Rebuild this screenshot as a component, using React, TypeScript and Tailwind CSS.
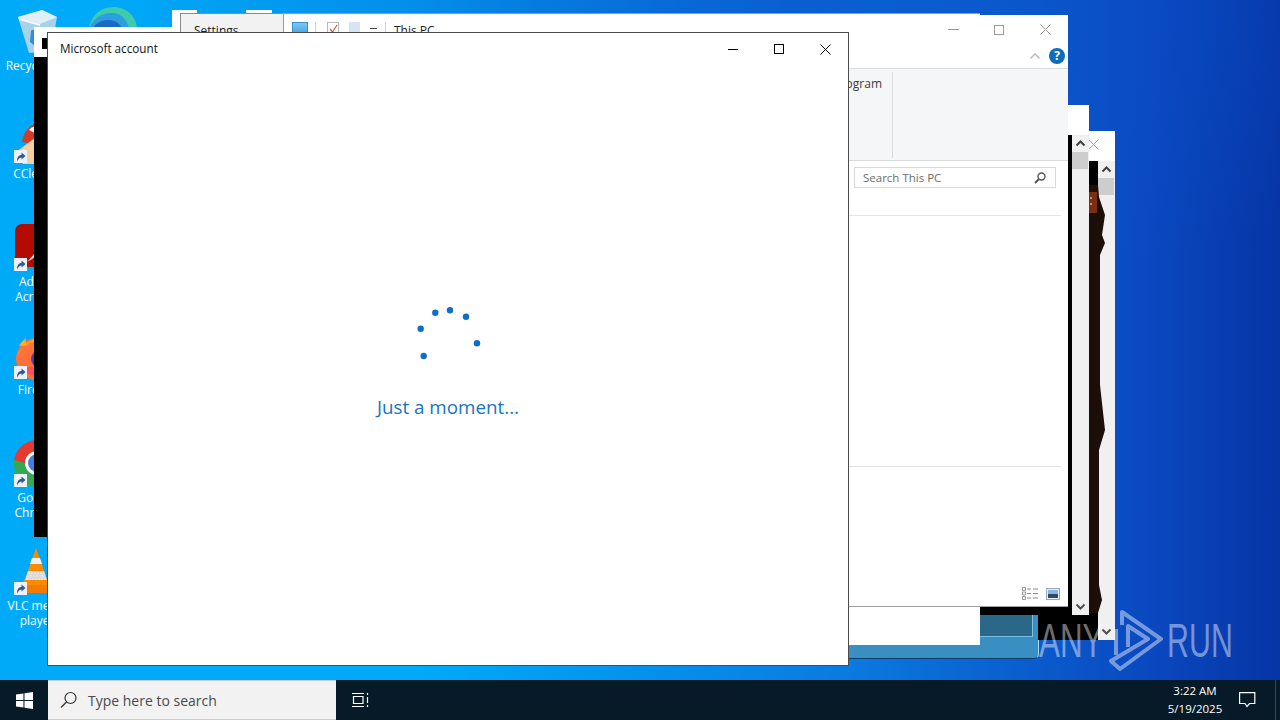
import type { ReactNode } from "react";

const ui = "font-['Open_Sans','Noto_Sans',sans-serif]";

function DesktopIcon({ art, children, shortcut = true }: { art: ReactNode; children: ReactNode; shortcut?: boolean }) {
  return (
    <div className="flex h-[108px] w-[76px] shrink-0 flex-col items-center">
      <div className="relative h-[48px] w-[48px]">
        {art}
        {shortcut && (
          <svg className="absolute left-[1px] top-[34px]" width="13" height="13" viewBox="0 0 13 13">
            <rect width="13" height="13" fill="#eef2f6" />
            <path d="M3 11.500 C3 7 5 5 7.500 5 L7.500 2.500 L11.500 6 L7.500 9.500 L7.500 7.500 C5.800 7.500 4.500 8.800 3 11.500 Z" fill="#2a5a9e" />
          </svg>
        )}
      </div>
      <div className={`mt-[2px] text-center text-[12px] leading-[15px] text-white ${ui}`}>{children}</div>
    </div>
  );
}

function DesktopIcons() {
  return (
    <>
      <svg className="absolute left-[86px] top-[6px]" width="52" height="30" viewBox="0 0 52 30">
        <path d="M2 30 C2 12 13 1 27 1 C41 1 51 11 51 24 L51 30 Z" fill="#3ccbab" />
        <path d="M2 30 C3 15 13 7 26 7 C37 7 44 17 44 30 Z" fill="#2d9fe0" />
        <path d="M3 30 C6 19 14 13 24 14 C33 15 38 22 38 30 Z" fill="#1a6cc0" />
      </svg>
      <div className="absolute left-[-1px] top-[8px] flex flex-col">
        <DesktopIcon
          shortcut={false}
          art={
            <svg width="48" height="48" viewBox="0 0 48 48">
              <path d="M5 9 L29 2 L44 9 L38 43 L16 45 Z" fill="#a6d3ea" />
              <path d="M5 9 L29 2 L44 9 L27 16 Z" fill="#e0eef6" />
              <path d="M5 9 L27 16 L27 18 L6 12 Z" fill="#f4f8fb" />
              <path d="M20 24 L30 22 L34 33 L26 39 L19 33 Z" fill="none" stroke="#2f8fd8" strokeWidth="4" />
            </svg>
          }
        >
          <span className="block w-[76px]">Recycle Bin</span>
        </DesktopIcon>
        <DesktopIcon
          art={
            <svg width="48" height="48" viewBox="0 0 48 48">
              <path d="M9 26 C11 12 21 5 35 4 L35 30 Z" fill="#d23a2a" />
              <path d="M16 14 C19 10 24 9 35 9 L35 24 Z" fill="#f5f5f5" />
              <path d="M3 36 L22 22 L35 26 L35 48 L10 48 Z" fill="#f4cfa0" />
            </svg>
          }
        >
          <span className="block pl-[3px]">CCleaner</span>
        </DesktopIcon>
        <DesktopIcon
          art={
            <svg width="48" height="48" viewBox="0 0 48 48">
              <rect x="2" y="0" width="46" height="43" rx="7" fill="#b30b00" />
              <path d="M14 38 C22 30 28 22 31 8 C31 22 26 32 14 38 Z" fill="#f7ddd8" />
            </svg>
          }
        >
          Adobe
          <br />
          Acrobat
        </DesktopIcon>
        <DesktopIcon
          art={
            <svg width="48" height="48" viewBox="0 0 48 48">
              <circle cx="24" cy="27" r="21" fill="#ff7139" />
              <path d="M6 14 C8 10 11 8 13 6 C12 10 13 12 16 13 Z" fill="#ffb01f" />
              <path d="M22 6 L12 12 L4 24 C8 14 16 10 24 10 Z" fill="#ffa21f" />
              <circle cx="27" cy="27" r="9" fill="#5a35b8" />
              <path d="M8 36 C14 44 26 46 36 40 L24 34 Z" fill="#ff4f5e" />
            </svg>
          }
        >
          Firefox
        </DesktopIcon>
        <DesktopIcon
          art={
            <svg width="48" height="48" viewBox="0 0 48 48">
              <path d="M24 0 A24 24 0 0 0 1 20 L14 24 A10 10 0 0 1 24 13 Z" fill="#e53a30" />
              <path d="M1 20 A24 24 0 0 0 24 47 L24 35 A12 12 0 0 1 12 23 Z" fill="#35a853" />
              <path d="M24 0 A24 24 0 0 1 48 23 L24 23 Z" fill="#fbc02d" />
              <circle cx="24" cy="23" r="12" fill="#fff" />
              <circle cx="24" cy="23" r="9" fill="#3f7fe0" />
            </svg>
          }
        >
          Google
          <br />
          Chrome
        </DesktopIcon>
        <DesktopIcon
          art={
            <svg width="48" height="48" viewBox="0 0 48 48">
              <path d="M7 38 L13 29 L33 29 L39 38 L39 45 L7 45 Z" fill="#f47b00" />
              <path d="M23 0 L36 37 L10 37 Z" fill="#ff8a00" />
              <path d="M19 10 L27 10 L29 16 L17 16 Z" fill="#f2f2f2" />
              <path d="M15 23 L31 23 L34 32 L12 32 Z" fill="#d8d8d8" />
              <path d="M15 25 h16 M14 28 h18 M13 31 h20" stroke="#f0f0f0" strokeWidth="1" strokeDasharray="2 1" />
            </svg>
          }
        >
          <span className="block w-[76px]">VLC media player</span>
        </DesktopIcon>
      </div>
    </>
  );
}

function ScrollStrip() {
  return (
    <div className="flex w-[17px] shrink-0 flex-col bg-[#f0f0f0]">
      <svg width="17" height="17" viewBox="0 0 17 17" className="shrink-0">
        <path d="M4.500 10.500 L8.500 6.500 L12.500 10.500" fill="none" stroke="#404040" strokeWidth="2" />
      </svg>
      <div className="h-[17px] w-[16px] shrink-0 bg-[#cdcdcd]" />
      <div className="flex-1" />
      <svg width="17" height="17" viewBox="0 0 17 17" className="shrink-0">
        <path d="M4.500 6.500 L8.500 10.500 L12.500 6.500" fill="none" stroke="#505050" strokeWidth="2" />
      </svg>
    </div>
  );
}

function BackWindows() {
  return (
    <>
      {/* teal window with a white window in front of it */}
      <div className="absolute left-[800px] top-[560px] h-[99px] w-[239px] rounded-br-[5px] border border-[#a9d8f0] border-b-[#0e3c68] bg-[#3a8fc2] pr-[5px]">
        <div className="h-[76px] border-b border-r border-[#7cc0e6] bg-[#2a6788]" />
      </div>
      <div className="absolute left-[800px] top-[560px] h-[85px] w-[180px] bg-white" />

      {/* far-right window with dark picture */}
      <div className="absolute left-[1038px] top-[131px] flex h-[509px] w-[77px] flex-col bg-white">
        <div className="flex h-[30px] shrink-0 items-center justify-end pr-[16px]">
          <svg width="11" height="11" viewBox="0 0 11 11" className="mb-[3px]">
            <path d="M.5.5 L10.500 10.500 M10.500.5 L.5 10.500" stroke="#a8a8a8" strokeWidth="1" />
          </svg>
        </div>
        <div className="flex min-h-0 flex-1">
          <div className="flex-1 bg-black" />
          <ScrollStrip />
        </div>
        <svg className="absolute left-[47px] top-[54px]" width="22" height="430" viewBox="0 0 22 430">
          <path d="M0 0 H13 L14 12 L20 30 L17 50 L20 58 L15 70 L15 200 L20 245 L14 265 L14 400 L17 415 L13 428 H0 Z" fill="#1c0e09" />
          <rect x="2" y="7" width="10" height="21" fill="#7a2e14" />
          <path d="M5 12 h2 v2 h-2z M5 18 h2 v2 h-2z" fill="#d98a4a" />
        </svg>
      </div>

      {/* middle window */}
      <div className="absolute left-[980px] top-[105px] flex h-[510px] w-[109px] flex-col bg-white">
        <div className="h-[30px] shrink-0" />
        <div className="flex min-h-0 flex-1">
          <div className="flex-1 bg-black" />
          <ScrollStrip />
        </div>
      </div>
    </>
  );
}

function Explorer() {
  return (
    <div className={`absolute left-[700px] top-[15px] flex h-[592px] w-[368px] flex-col border-b border-[#a0a0a0] bg-white ${ui}`}>
      <div className="flex h-[29px] shrink-0 justify-end">
        <div className="flex h-[29px] w-[46px] items-center justify-center">
          <div className="h-[1px] w-[11px] bg-[#9a9a9a]" />
        </div>
        <div className="flex h-[29px] w-[46px] items-center justify-center">
          <div className="h-[10px] w-[10px] border border-[#9a9a9a]" />
        </div>
        <div className="flex h-[29px] w-[46px] items-center justify-center">
          <svg width="11" height="11" viewBox="0 0 11 11">
            <path d="M.5.5 L10.500 10.500 M10.500.5 L.5 10.500" stroke="#9a9a9a" strokeWidth="1" />
          </svg>
        </div>
      </div>
      <div className="flex h-[24px] shrink-0 items-center justify-end gap-[8px] pr-[3px]">
        <svg width="12" height="8" viewBox="0 0 12 8">
          <path d="M1.500 6.500 L6 2 L10.500 6.500" fill="none" stroke="#b4b4b4" strokeWidth="1.400" />
        </svg>
        <div className="flex h-[16px] w-[16px] items-center justify-center rounded-full bg-[#0f6cbd] text-[12px] font-bold leading-none text-white">
          ?
        </div>
      </div>
      <div className="flex h-[93px] shrink-0 items-start justify-end border-y border-[#dadbdc] bg-[#f5f6f7] pr-[175px] pt-[3px]">
        <div className="h-[86px] whitespace-nowrap border-r border-[#dadbdc] pr-[10px] pt-[4px] text-[12px] leading-[16px] text-[#3b3b3b]">
          Uninstall a program
        </div>
      </div>
      <div className="mr-[7px] flex h-[55px] shrink-0 items-start justify-end border-b border-[#e6e6e6] pr-[5px] pt-[6px]">
        <div className="flex h-[21px] w-[202px] items-center justify-between border border-[#d9d9d9] px-[8px] text-[11.500px] text-[#6d6d6d]">
          <span>Search This PC</span>
          <svg width="14" height="14" viewBox="0 0 14 14">
            <circle cx="8.500" cy="5.500" r="3.500" fill="none" stroke="#555" strokeWidth="1.400" />
            <path d="M6 8 L2 12" stroke="#555" strokeWidth="2" />
          </svg>
        </div>
      </div>
      <div className="mr-[7px] h-[251px] shrink-0 border-b border-[#e2e2e2]" />
      <div className="flex flex-1 items-end justify-end gap-[7px] pb-[6px] pr-[8px]">
        <svg width="17" height="13" viewBox="0 0 17 13">
          <path d="M.5.5h3v3h-3zM.5 5h3v3h-3zM.5 9.500h3v3h-3z" fill="none" stroke="#9a9a9a" />
          <path d="M5 2h4M11 2h5M5 6.500h4M11 6.500h5M5 11h4M11 11h5" stroke="#8a8a8a" />
        </svg>
        <svg width="14" height="12" viewBox="0 0 14 12">
          <rect x=".5" y=".5" width="13" height="11" fill="#e8f0fa" stroke="#9aa8b8" />
          <rect x="2" y="2" width="10" height="8" fill="#8ab6ee" />
          <rect x="2" y="6" width="10" height="4" fill="#33495c" />
        </svg>
      </div>
    </div>
  );
}

function TopStrips() {
  return (
    <>
      <div className="absolute left-[172px] top-[10px] h-[22px] w-[25px] bg-white" />
      <div className="absolute left-[246px] top-[10px] h-[10px] w-[26px] bg-white" />
      <div className={`absolute left-[180px] top-[13px] flex h-[19px] w-[800px] text-[12px] leading-[16px] text-[#222] ${ui}`}>
        <div className="w-[103px] shrink-0 border-l border-t border-[#8a8a8a] bg-[#f2f2f2] pl-[13px] pt-[9px]">Settings</div>
        <div className="flex flex-1 items-start border-l border-t border-[#9a9a9a] bg-white pl-[8px] pt-[8px]">
          <div className="h-[14px] w-[16px] shrink-0 border border-[#3c8fc8] bg-[linear-gradient(#7cc8f4,#3f9fe0)]" />
          <div className="ml-[7px] h-[16px] w-[1px] shrink-0 bg-[#cfcfcf]" />
          <svg width="12" height="14" viewBox="0 0 12 14" className="ml-[11px] shrink-0">
            <rect x=".5" y=".5" width="11" height="13" fill="#fff" stroke="#b8b8b8" />
            <path d="M3 7 L5.500 10 L10 3" fill="none" stroke="#d8573f" strokeWidth="1.200" />
          </svg>
          <div className="ml-[10px] h-[14px] w-[11px] shrink-0 bg-[#d8e4f4]" />
          <div className="ml-[10px] mt-[6px] h-[5px] w-[7px] shrink-0 border-y border-[#444]" />
          <div className="ml-[8px] h-[16px] w-[1px] shrink-0 bg-[#cfcfcf]" />
          <div className="ml-[8px] mt-[1px]">This PC</div>
        </div>
      </div>
    </>
  );
}

function ConsoleWindow() {
  return (
    <div className="absolute left-[34px] top-[27px] flex h-[510px] w-[146px] flex-col bg-black">
      <div className="flex h-[30px] shrink-0 items-start bg-white pl-[8px] pt-[11px]">
        <div className="h-[11px] w-[5px] bg-black" />
      </div>
    </div>
  );
}

function AccountWindow() {
  return (
    <div className={`absolute left-[47px] top-[32px] flex h-[634px] w-[802px] flex-col border border-[#4c4c4c] bg-white ${ui}`}>
      <div className="flex h-[32px] shrink-0 items-center justify-between pl-[12px]">
        <span className="text-[11.700px] text-[#111]">Microsoft account</span>
        <div className="flex">
          <div className="flex h-[32px] w-[46px] items-center justify-center">
            <div className="h-[1px] w-[10px] bg-black" />
          </div>
          <div className="flex h-[32px] w-[46px] items-center justify-center">
            <div className="h-[10px] w-[10px] border border-black" />
          </div>
          <div className="flex h-[32px] w-[46px] items-center justify-center">
            <svg width="11" height="11" viewBox="0 0 11 11">
              <path d="M.5.5 L10.500 10.500 M10.500.5 L.5 10.500" stroke="#000" strokeWidth="1" />
            </svg>
          </div>
        </div>
      </div>
      <div className="flex flex-1 flex-col items-center pt-[239px]">
        <svg width="76" height="60" viewBox="0 0 76 60">
          <circle cx="25.300" cy="8.700" r="3.200" fill="#0f6fc6" />
          <circle cx="40" cy="6.300" r="3.200" fill="#0f6fc6" />
          <circle cx="56" cy="12.700" r="3.200" fill="#0f6fc6" />
          <circle cx="10.700" cy="24.700" r="3.200" fill="#0f6fc6" />
          <circle cx="67" cy="39.300" r="3.200" fill="#0f6fc6" />
          <circle cx="13.700" cy="52" r="3.200" fill="#0f6fc6" />
        </svg>
        <div className="mt-[31px] text-[18.800px] leading-[24px] text-[#1a73c4]">Just a moment...</div>
      </div>
    </div>
  );
}

function Watermark() {
  return (
    <div className="absolute left-[1039px] top-[608px] flex h-[64px] w-[195px] items-center font-['Liberation_Sans',sans-serif] text-[49px] leading-none text-[#ffffff70]">
      <span className="w-[70px] shrink-0 origin-left scale-x-[0.64]">ANY</span>
      <svg width="58" height="62" viewBox="0 0 58 62" className="ml-[-1px] mr-[1px] shrink-0">
        <path
          d="M14 16 L14 3 L53 30 L12 60 L3 52 L40 30 L20 17 L20 38 M8 46 L8 20"
          fill="none"
          stroke="#ffffff70"
          strokeWidth="4"
          strokeLinejoin="round"
        />
      </svg>
      <span className="shrink-0 origin-left scale-x-[0.62]">RUN</span>
    </div>
  );
}

function Taskbar() {
  return (
    <div className={`absolute bottom-0 left-0 flex h-[40px] w-[1280px] items-center bg-[#061a28] text-white ${ui}`}>
      <div className="flex h-[40px] w-[48px] items-center justify-center">
        <svg width="17" height="17" viewBox="0 0 16 16" fill="#fff">
          <path d="M0 2.300 L7 1.300 V7.500 H0 Z M8 1.100 L16 0 V7.500 H8 Z M0 8.500 H7 V14.700 L0 13.700 Z M8 8.500 H16 V16 L8 14.900 Z" />
        </svg>
      </div>
      <div className="flex h-[40px] w-[288px] items-center border-y border-[#c8ccd0] bg-[#f2f2f2] pl-[12px] text-[#4a4a4a]">
        <svg width="18" height="18" viewBox="0 0 18 18" className="mr-[10px]">
          <circle cx="10.500" cy="7" r="5.500" fill="none" stroke="#333" strokeWidth="1.200" />
          <path d="M6.500 11 L1 16.500" stroke="#333" strokeWidth="1.200" />
        </svg>
        <span className="text-[14px]">Type here to search</span>
      </div>
      <div className="flex h-[40px] w-[48px] items-center justify-center">
        <svg width="17" height="16" viewBox="0 0 17 16" fill="none" stroke="#fff" strokeWidth="1.200">
          <path d="M0 1.500 H12 M0 14.500 H12 M1.500 4.500 H11 V11.500 H1.500 Z M15.500 1 V3 M15.500 5 V11 M15.500 13 V15" />
        </svg>
      </div>
      <div className="ml-auto flex items-center">
        <div className="w-[64px] text-center text-[11.500px] leading-[18px]">
          <div>3:22 AM</div>
          <div>5/19/2025</div>
        </div>
        <div className="flex h-[40px] w-[40px] items-center justify-center">
          <svg width="17" height="16" viewBox="0 0 17 16" fill="none" stroke="#fff" strokeWidth="1.200">
            <path d="M.6.6 H15.800 V11.500 H10.500 L8 14.500 L6 11.500 H.6 Z" />
          </svg>
        </div>
        <div className="ml-[8px] mr-[4px] h-[40px] w-[1px] bg-[#3a4652]" />
      </div>
    </div>
  );
}

export default function App() {
  return (
    <div className="relative h-[720px] w-[1280px] overflow-hidden bg-[radial-gradient(ellipse_700px_300px_at_800px_0,#0a4fc8b0,transparent),linear-gradient(90deg,#00aaf8_0%,#00aaf8_33%,#0a7be0_66%,#0a48c0_90%,#0635a5_100%)]">
      <DesktopIcons />
      <BackWindows />
      <TopStrips />
      <Explorer />
      <ConsoleWindow />
      <AccountWindow />
      <Watermark />
      <Taskbar />
    </div>
  );
}
